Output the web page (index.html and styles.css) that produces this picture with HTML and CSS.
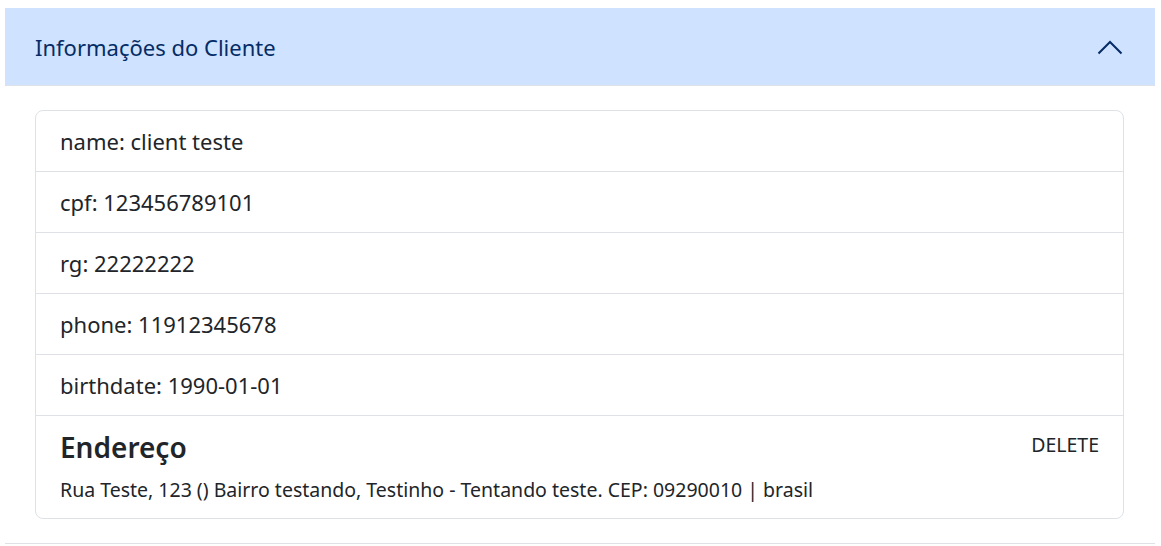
FILE: index.html
```html
<!DOCTYPE html>
<html lang="pt-BR">
<head>
<meta charset="utf-8">
<title>Informações do Cliente</title>
<link rel="stylesheet" href="styles.css">
</head>
<body>
<div class="page">
  <div class="accordion-item">
    <h2 class="accordion-header">
      <button class="accordion-button" type="button">
        <span class="accordion-title">Informações do Cliente</span>
        <svg class="chevron" width="26" height="15" viewBox="0 0 26 15" aria-hidden="true">
          <polyline points="1.5,13.5 13,2 24.5,13.5" fill="none" stroke="#052c65" stroke-width="2"/>
        </svg>
      </button>
    </h2>
    <div class="accordion-body">
      <ul class="list-group">
        <li class="list-item">name: client teste</li>
        <li class="list-item">cpf: 123456789101</li>
        <li class="list-item">rg: 22222222</li>
        <li class="list-item">phone: 11912345678</li>
        <li class="list-item">birthdate: 1990-01-01</li>
        <li class="list-item address-item">
          <div class="address-head">
            <h5 class="address-title">Endereço</h5>
            <button class="delete-btn" type="button">DELETE</button>
          </div>
          <p class="address-text">Rua Teste, 123 () Bairro testando, Testinho - Tentando teste. CEP: 09290010 | brasil</p>
        </li>
      </ul>
    </div>
  </div>
</div>
</body>
</html>
```
FILE: styles.css
```css
* { box-sizing: border-box; }

body {
  margin: 0;
  font-family: "Noto Sans", "Open Sans", sans-serif;
  color: #212529;
  background: #fff;
}

.page {
  padding: 8px 6px 0 5px;
}

.accordion-item {
  border-bottom: 1px solid #dee2e6;
}

.accordion-header {
  margin: 0;
}

.accordion-button {
  display: flex;
  align-items: center;
  justify-content: space-between;
  width: 100%;
  padding: 24px 32px 24px 30px;
  border: 0;
  background: #cfe2ff;
  color: #052c65;
  font-family: inherit;
  font-size: 22px;
  font-weight: 400;
  line-height: 30px;
  text-align: left;
  box-shadow: inset 0 -1px 0 #dee2e6;
  cursor: pointer;
}

.chevron {
  display: block;
}

.accordion-body {
  padding: 24px 31px 24px 30px;
}

.list-group {
  list-style: none;
  margin: 0;
  padding: 0;
  border: 1px solid #dee2e6;
  border-radius: 8px;
}

.list-item {
  padding: 15px 24px;
  font-size: 22px;
  line-height: 30px;
  border-bottom: 1px solid #dee2e6;
}

.list-item:last-child {
  border-bottom: 0;
}

.address-item {
  padding: 13px 24px 14px;
}

.address-head {
  display: flex;
  justify-content: space-between;
  align-items: flex-start;
}

.address-title {
  margin: 0;
  font-size: 28px;
  font-weight: 600;
  line-height: 36px;
}

.delete-btn {
  border: 0;
  background: none;
  padding: 0;
  margin: 2px 0 0;
  font-family: inherit;
  font-size: 19.5px;
  line-height: 28px;
  color: #212529;
  cursor: pointer;
}

.address-text {
  margin: 11px 0 0;
  font-size: 19.5px;
  line-height: 28px;
}
```
